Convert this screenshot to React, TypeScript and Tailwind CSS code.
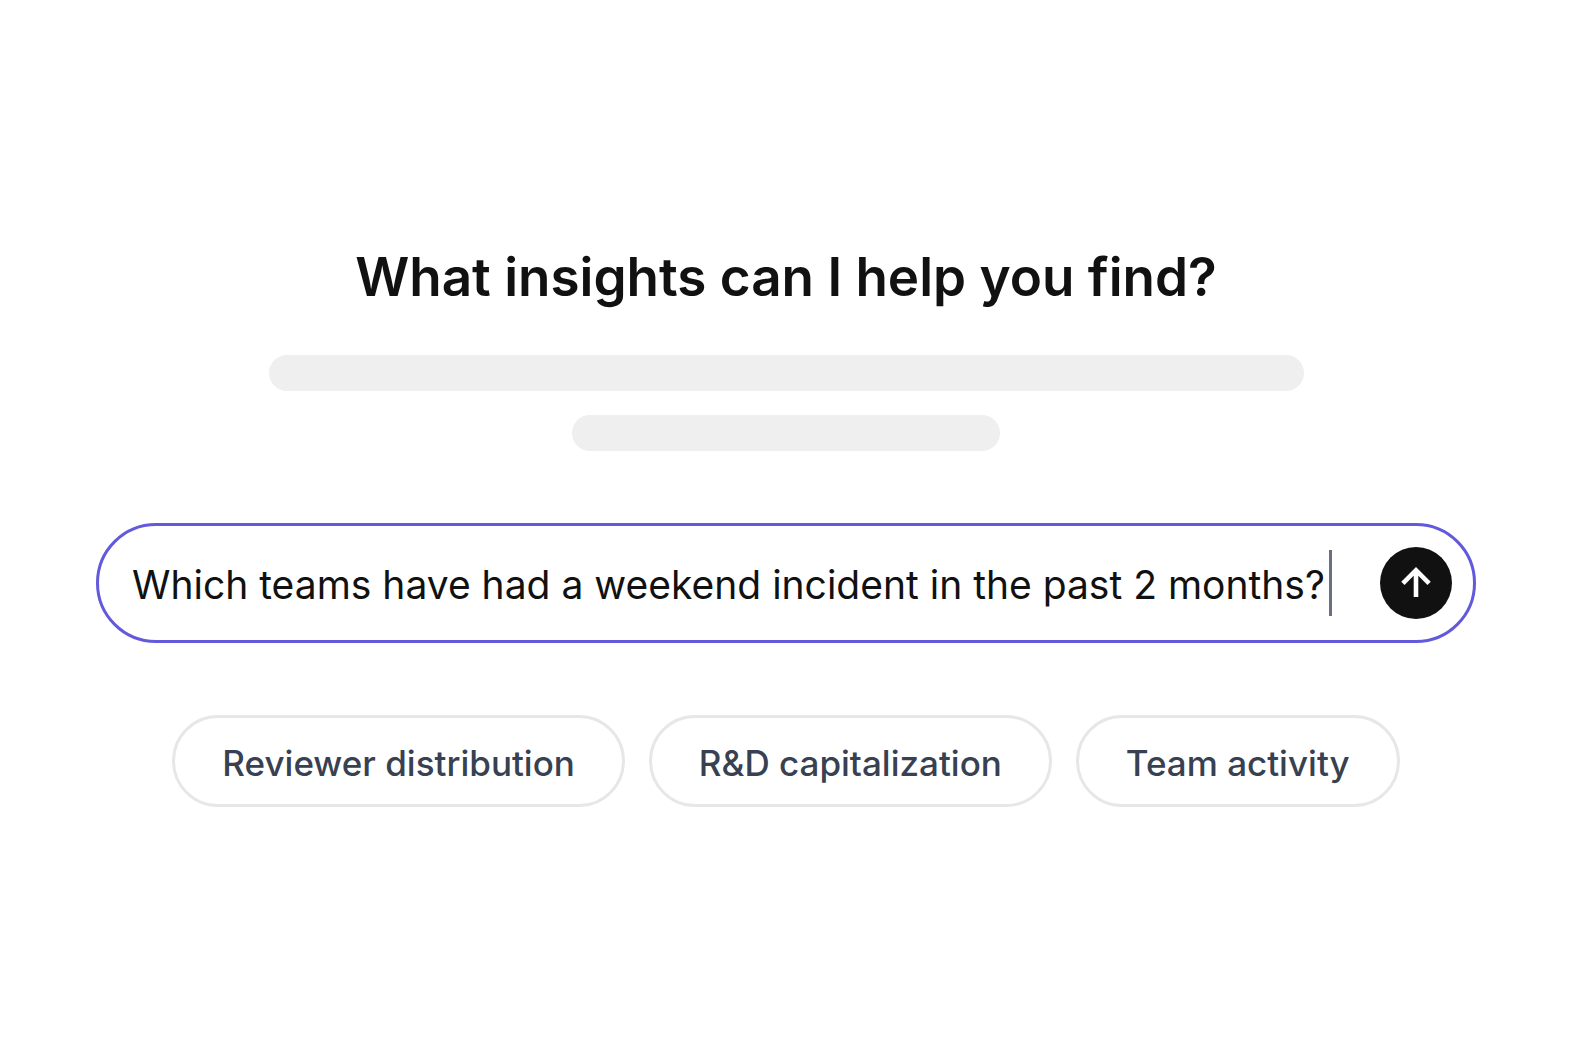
import { useState } from 'react';

const suggestions = ['Reviewer distribution', 'R&D capitalization', 'Team activity'];

const App = () => {
  const [question, setQuestion] = useState('Which teams have had a weekend incident in the past 2 months?');

  return (
    <main className="flex min-h-screen flex-col items-center justify-center bg-white px-24 font-['Inter',sans-serif]">
      <h1 className="text-center text-[53px] leading-[68px] font-semibold text-[#111111]">What insights can I help you find?</h1>

      <div className="mt-11 flex w-full flex-col items-center gap-6">
        <div className="h-9 w-3/4 rounded-full bg-[#efefef]" />
        <div className="h-9 w-[31%] rounded-full bg-[#efefef]" />
      </div>

      <form
        onSubmit={(e) => e.preventDefault()}
        className="mt-18 flex w-full items-center rounded-full border-3 border-[#6259db] py-[21px] pr-[21px] pl-[33px]"
      >
        <div className="flex min-w-0 flex-1 items-center gap-1">
          <input
            aria-label="Question"
            value={question}
            onChange={(e) => setQuestion(e.target.value)}
            className="field-sizing-content max-w-full min-w-0 bg-transparent pt-1 text-[39px] leading-[66px] text-[#111111] outline-none"
          />
          <span className="h-[66px] w-[3px] shrink-0 bg-[#6b7080]" />
        </div>
        <button type="submit" aria-label="Send" className="flex size-18 shrink-0 items-center justify-center rounded-full bg-[#111111] text-white">
          <svg viewBox="0 0 36 36" className="size-9" fill="none" stroke="currentColor" strokeWidth="4.6">
            <path d="M18 32V5M4.9 18.3L18 5.2L31.1 18.3" />
          </svg>
        </button>
      </form>

      <div className="mt-18 flex flex-wrap justify-center gap-6">
        {suggestions.map((label) => (
          <button
            key={label}
            type="button"
            className="rounded-full border-3 border-[#e5e7e9] px-[47px] pt-[21px] pb-[17px] text-[35px] leading-[48px] font-medium text-[#374151]"
          >
            {label}
          </button>
        ))}
      </div>
    </main>
  );
};

export default App;
